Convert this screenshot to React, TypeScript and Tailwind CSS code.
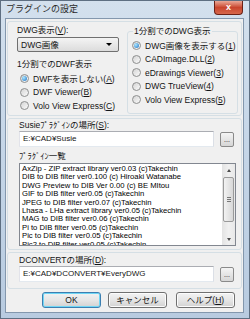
import React from "react";

const Radio = ({ checked, children }: { checked?: boolean; children: React.ReactNode }) => (
  <div className="flex h-[13.5px] items-center">
    <span className="flex h-[9px] w-[9px] items-center justify-center rounded-full border border-[#8e8f8f] bg-gradient-to-br from-[#d4d4d4] to-[#fbfbfb]">
      {checked && (
        <span className="h-[5px] w-[5px] rounded-full bg-[radial-gradient(circle_at_35%_35%,#aee8ff,#1a6fc4)]" />
      )}
    </span>
    <span className="ml-[4px] text-[8.5px] leading-[10px] whitespace-nowrap">{children}</span>
  </div>
);

const Button = ({ children, primary }: { children: React.ReactNode; primary?: boolean }) => (
  <div
    className={`flex h-[16px] w-[59px] items-center justify-center rounded-[3px] border bg-gradient-to-b from-[#f2f2f2] via-[#e6e6e6] to-[#d2d2d2] text-[8.5px] leading-[10px] ${
      primary ? "border-[#3c7fb1] shadow-[inset_0_0_0_1px_#6fd6f5]" : "border-[#707070] shadow-[inset_0_0_0_1px_#fcfcfc]"
    }`}
  >
    {children}
  </div>
);

const BrowseButton = () => (
  <div className="flex h-[15px] w-[14px] items-end justify-center rounded-[2px] border border-[#8a8a8a] bg-gradient-to-b from-[#f4f4f4] to-[#d6d6d6] pb-[3px] text-[7px] leading-[7px]">
    ...
  </div>
);

const PathInput = ({ value }: { value: string }) => (
  <div className="flex items-center gap-[6px]">
    <div className="flex h-[16px] w-[195px] items-center border border-[#abadb3] border-b-[#e3e9ef] border-l-[#e2e3ea] border-r-[#dbdfe6] bg-white pl-[3px] text-[8px] leading-[10px]">
      {value}
    </div>
    <BrowseButton />
  </div>
);

const plugins = [
  "AxZip - ZIP extract library ver0.03 (c)Takechin",
  "DIB to DIB filter ver0.100 (c) Hiroaki Watanabe",
  "DWG Preview to DIB Ver 0.00 (c) BE MItou",
  "GIF to DIB filter ver0.05 (c)Takechin",
  "JPEG to DIB filter ver0.07 (c)Takechin",
  "Lhasa - LHa extract library ver0.05 (c)Takechin",
  "MAG to DIB filter ver0.06 (c)Takechin",
  "Pi to DIB filter ver0.05 (c)Takechin",
  "Pic to DIB filter ver0.05 (c)Takechin",
  "Pic2 to DIB filter ver0.05 (c)Takechin",
];

export default function App() {
  return (
    <div className="flex h-[319px] w-[250px] flex-col border border-[#5e6f82] bg-gradient-to-b from-[#d3e0ed] via-[#c4d5e7] to-[#b8cbe0] font-['Liberation_Sans','Noto_Sans_CJK_JP',sans-serif] text-[#141414]">
      {/* title bar */}
      <div className="flex h-[17px] items-start justify-between">
        <span className="mt-[3px] ml-[5px] text-[9px] leading-[10px] text-[#2a2a2a]">プラグインの設定</span>
        <div className="mr-[6px] flex h-[14px] w-[29px] items-center justify-center rounded-b-[4px] border border-t-0 border-[#6b2116] bg-gradient-to-b from-[#e9a897] via-[#c9452d] to-[#d6674b] text-[9px] font-bold leading-[9px] text-white">
          x
        </div>
      </div>

      {/* client area */}
      <div className="ml-[4px] flex h-[295px] w-[239px] flex-col border border-[#8397ad] bg-[#f0f0f0] px-[1px] pt-[2px]">
        {/* top panel */}
        <div className="flex h-[95px] rounded-[3px] border border-[#d5dfe5]">
          <div className="flex w-[118px] flex-col pl-[9px] pt-[3px]">
            <span className="text-[8.5px] leading-[10px]">
              DWG表示(<u>V</u>):
            </span>
            <div className="mt-[2px] flex h-[15px] w-[102px] items-center justify-between rounded-[2px] border border-[#707070] bg-gradient-to-b from-[#f4f4f4] to-[#dcdcdc] pl-[3px] pr-[6px] text-[8.5px] leading-[10px]">
              DWG画像
              <span className="h-0 w-0 border-x-[3px] border-t-[3px] border-x-transparent border-t-black" />
            </div>
            <span className="mt-[7px] text-[8.5px] leading-[10px]">1分割でのDWF表示</span>
            <div className="mt-[3px] flex flex-col pl-[3px]">
              <Radio checked>
                DWFを表示しない(<u>A</u>)
              </Radio>
              <Radio>
                DWF Viewer(<u>B</u>)
              </Radio>
              <Radio>
                Volo View Express(<u>C</u>)
              </Radio>
            </div>
          </div>
          <fieldset className="mt-[4px] ml-[1px] h-[88px] w-[111px] rounded-[3px] border border-[#d5dfe5] pl-[4px]">
            <legend className="ml-[1px] px-[1px] text-[8.5px] leading-[10px]">1分割でのDWG表示</legend>
            <div className="flex flex-col pt-[3px]">
              <Radio checked>
                DWG画像を表示する(<u>1</u>)
              </Radio>
              <Radio>
                CADImage.DLL(<u>2</u>)
              </Radio>
              <Radio>
                eDrawings Viewer(<u>3</u>)
              </Radio>
              <Radio>
                DWG TrueView(<u>4</u>)
              </Radio>
              <Radio>
                Volo View Express(<u>5</u>)
              </Radio>
            </div>
          </fieldset>
        </div>

        {/* plugin panel */}
        <div className="mt-[2px] flex h-[132px] flex-col rounded-[3px] border border-[#d5dfe5] pl-[11px] pt-[1px]">
          <span className="text-[8.5px] leading-[10px]">
            Susieﾌﾟﾗｸﾞｲﾝの場所(<u>S</u>):
          </span>
          <div className="mt-[1px]">
            <PathInput value="E:¥CAD¥Susie" />
          </div>
          <span className="mt-[4px] text-[8.5px] leading-[10px]">ﾌﾟﾗｸﾞｲﾝ一覧</span>
          <div className="mt-[2px] flex h-[83px] w-[217px] border border-[#828790] bg-white">
            <div className="flex-1 overflow-hidden pl-[2px] pt-[1px] text-[7.7px] leading-[8.4px] text-black">
              {plugins.map((p) => (
                <div key={p} className="whitespace-nowrap">
                  {p}
                </div>
              ))}
            </div>
            <div className="flex w-[13px] flex-col items-center bg-gradient-to-r from-[#e3e3e3] via-[#f0f0f0] to-[#e8e8e8]">
              <div className="flex h-[12px] items-center">
                <span className="h-0 w-0 border-x-[2.5px] border-b-[3px] border-x-transparent border-b-[#4d4d4d]" />
              </div>
              <div className="mt-[1px] flex h-[45px] w-[11px] items-center justify-center rounded-[2px] border border-[#9a9a9a] bg-gradient-to-r from-[#f2f2f2] to-[#d8d8d8]">
                <div className="flex flex-col gap-[1px]">
                  <span className="h-px w-[4px] bg-[#777]" />
                  <span className="h-px w-[4px] bg-[#777]" />
                  <span className="h-px w-[4px] bg-[#777]" />
                </div>
              </div>
              <div className="mt-auto flex h-[12px] items-center">
                <span className="h-0 w-0 border-x-[2.5px] border-t-[3px] border-x-transparent border-t-[#4d4d4d]" />
              </div>
            </div>
          </div>
        </div>

        {/* dconvert panel */}
        <div className="mt-[2px] flex h-[37px] flex-col rounded-[3px] border border-[#d5dfe5] pl-[11px] pt-[2px]">
          <span className="text-[8.5px] leading-[10px]">
            DCONVERTの場所(<u>D</u>):
          </span>
          <div className="mt-[1px]">
            <PathInput value="E:¥CAD¥DCONVERT¥EveryDWG" />
          </div>
        </div>

        {/* buttons */}
        <div className="mt-[3px] flex justify-end gap-[7px] pr-[7px]">
          <Button primary>OK</Button>
          <Button>キャンセル</Button>
          <div className="ml-[2px]">
            <Button>
              ヘルプ(<u>H</u>)
            </Button>
          </div>
        </div>
      </div>
    </div>
  );
}
